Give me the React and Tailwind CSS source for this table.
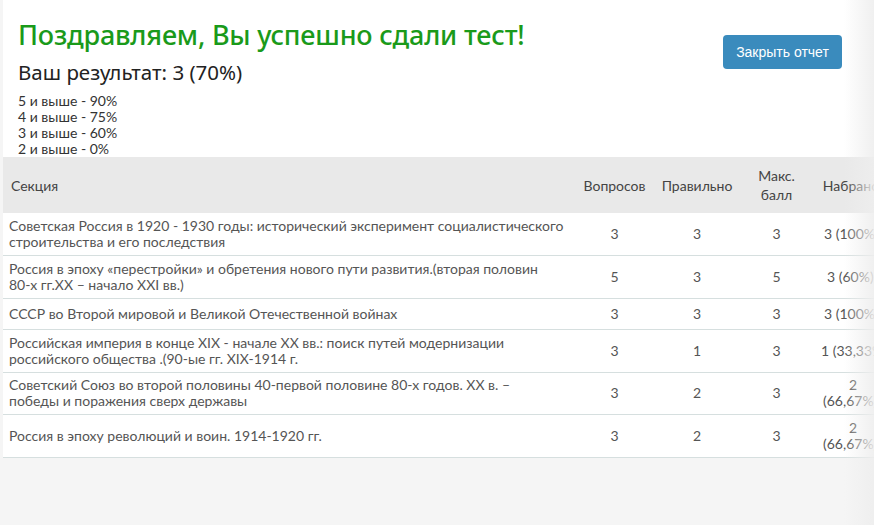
import React from "react";

const rows = [
  { s: ["Советская Россия в 1920 - 1930 годы: исторический эксперимент социалистического", "строительства и его последствия"], q: 3, c: 3, m: 3, r: ["3 (100%)"], h: "h-[42px]", p: "pl-[11px]" },
  { s: ["Россия в эпоху «перестройки» и обретения нового пути развития.(вторая половин", "80-х гг.XX – начало XXI вв.)"], q: 5, c: 3, m: 5, r: ["3 (60%)"], h: "h-[43px]", p: "pl-[14px]" },
  { s: ["СССР во Второй мировой и Великой Отечественной войнах"], q: 3, c: 3, m: 3, r: ["3 (100%)"], h: "h-[31px]", p: "pl-[11px]" },
  { s: ["Российская империя в конце XIX - начале XX вв.: поиск путей модернизации", "российского общества .(90-ые гг. XIX-1914 г."], q: 3, c: 1, m: 3, r: ["1 (33,33%)"], h: "h-[43px]", p: "pl-[8px]" },
  { s: ["Советский Союз во второй половины 40-первой половине 80-х годов. XX в. –", "победы и поражения сверх державы"], q: 3, c: 2, m: 3, r: ["2", "(66,67%)"], h: "h-[42px]", p: "" },
  { s: ["Россия в эпоху революций и воин. 1914-1920 гг."], q: 3, c: 2, m: 3, r: ["2", "(66,67%)"], h: "h-[43px]", p: "" },
];

export default function App() {
  return (
    <div className="relative w-[874px] h-[525px] overflow-hidden bg-[#f5f5f5]">
      <div className="ml-[3px] bg-white">
        <div className="flex justify-between pl-[15px] pr-[32px]">
          <div>
            <h1 className="pt-[17px] text-[27px] leading-[36px] font-medium text-[#1a9a1a] tracking-[-0.2px] [font-family:'Noto_Sans',sans-serif]">
              Поздравляем, Вы успешно сдали тест!
            </h1>
            <div className="mt-[6px] text-[20.5px] leading-[26px] text-[#222] [font-family:'Noto_Sans',sans-serif]">
              Ваш результат: 3 (70%)
            </div>
            <div className="mt-[8px] text-[14px] leading-[16px] text-[#333] [font-family:Lato,sans-serif]">
              <div>5 и выше - 90%</div>
              <div>4 и выше - 75%</div>
              <div>3 и выше - 60%</div>
              <div>2 и выше - 0%</div>
            </div>
          </div>
          <div className="pt-[35px]">
            <button className="h-[34px] w-[119px] rounded-[4px] bg-[#3a8bbd] text-[14px] text-white [font-family:'Liberation_Sans',Arial,sans-serif]">
              Закрыть отчет
            </button>
          </div>
        </div>
        <table className="w-[886px] table-fixed border-collapse text-[14px] text-[#555] [font-family:Lato,sans-serif]">
          <colgroup>
            <col className="w-[572px]" />
            <col className="w-[79px]" />
            <col className="w-[86px]" />
            <col className="w-[73px]" />
            <col className="w-[76px]" />
          </colgroup>
          <thead>
            <tr className="h-[56px] bg-[#e9e9e9] text-[#444]">
              <th className="px-[8px] text-left font-normal leading-[19px] align-middle">Секция</th>
              <th className="px-[2px] text-center font-normal leading-[19px] align-middle">Вопросов</th>
              <th className="px-[2px] text-center font-normal leading-[19px] align-middle">Правильно</th>
              <th className="px-[16px] text-center font-normal leading-[19px] align-middle">Макс. балл</th>
              <th className="px-[8px] text-center font-normal leading-[19px] align-middle whitespace-nowrap">Набрано</th>
            </tr>
          </thead>
          <tbody>
            {rows.map((r, i) => (
              <tr key={i} className={`${r.h} border-b border-[#d6dfdf]`}>
                <td className="pl-[6px] pr-[4px] py-[4px] leading-[16px] align-middle whitespace-nowrap">
                  {r.s.map((l, j) => (
                    <div key={j}>{l}</div>
                  ))}
                </td>
                <td className="py-[4px] text-center leading-[16px] align-middle">{r.q}</td>
                <td className="py-[4px] text-center leading-[16px] align-middle">{r.c}</td>
                <td className="py-[4px] text-center leading-[16px] align-middle">{r.m}</td>
                <td className="py-[4px] leading-[16px] align-middle whitespace-nowrap">
                  {r.r.length === 1 ? (
                    <div className={r.p}>{r.r[0]}</div>
                  ) : (
                    <div className="flex flex-col items-start pl-[10px]">
                      <div className="w-[60px] text-center">{r.r[0]}</div>
                      <div>{r.r[1]}</div>
                    </div>
                  )}
                </td>
              </tr>
            ))}
          </tbody>
        </table>
      </div>
      <div className="pointer-events-none absolute right-0 top-0 h-full w-[30px] bg-gradient-to-r from-transparent to-[rgba(238,238,238,0.9)]" />
    </div>
  );
}
